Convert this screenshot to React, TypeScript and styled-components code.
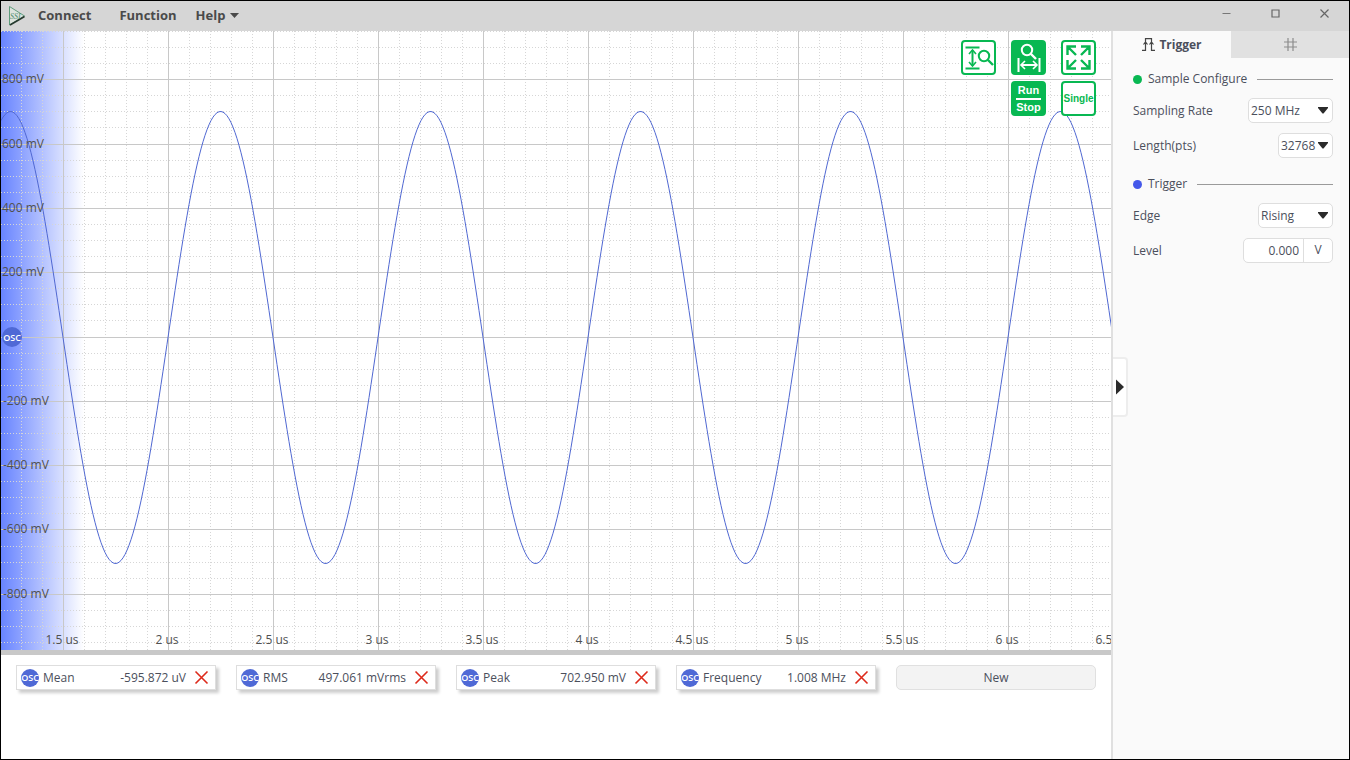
import React, { useEffect, useRef, useState } from 'react';
import styled, { createGlobalStyle } from 'styled-components';

const GlobalStyle = createGlobalStyle`
  *, *::before, *::after { box-sizing: border-box; }
  body { margin: 0; }
  body, button, input, select {
    font-family: "Open Sans", "Noto Sans", sans-serif;
    font-size: 12px;
    color: #4b4f5c;
  }
  button { border: 0; padding: 0; background: none; cursor: pointer; }
`;

const Window = styled.div`
  display: flex;
  flex-direction: column;
  min-height: 100vh;
  border: 1px solid #000;
  background: #fff;
`;

const TitleBar = styled.header`
  display: flex;
  align-items: center;
  height: 30px;
  flex: none;
  padding: 0 5px 0 6px;
  background: #d6d6d6;
`;

const Menu = styled.nav`
  display: flex;
  align-items: center;
  gap: 28px;
  margin: 0 0 2px 11px;
  flex: 1;
`;

const MenuItem = styled.button<{ $narrow?: boolean }>`
  display: flex;
  align-items: center;
  gap: 5px;
  margin-right: ${(p) => (p.$narrow ? '-9px' : '0')};
  font-size: 13px;
  font-weight: 700;
  line-height: 20px;
  color: #4a4a4a;
`;

const WindowButtons = styled.div`
  display: flex;
  align-self: flex-start;
`;

const WindowButton = styled.button`
  display: grid;
  place-items: center;
  width: 40px;
  height: 25px;
  margin-left: 9px;
`;

const Main = styled.main`
  display: flex;
  flex: 1;
`;

const Workspace = styled.section`
  display: flex;
  flex-direction: column;
  flex: 1;
  min-width: 0;
`;

const Plot = styled.div`
  position: relative;
  flex: 1;
  min-height: 500px;
  overflow: hidden;
`;

const PlotDrawing = styled.svg`
  position: absolute;
  inset: 0;
  width: 100%;
  height: 100%;
  text { font-size: 12px; fill: #505050; }
  .badge { font-size: 9px; font-weight: 600; fill: #fff; }
`;

const Tools = styled.div`
  position: absolute;
  top: 9px;
  right: 15px;
  display: grid;
  grid-template-columns: repeat(3, 35px);
  gap: 6px 15px;
`;

const ToolButton = styled.button<{ $filled?: boolean; $second?: boolean }>`
  display: flex;
  flex-direction: column;
  align-items: center;
  justify-content: center;
  width: 35px;
  height: 35px;
  border: 2px solid #08b852;
  border-radius: 4px;
  background: ${(p) => (p.$filled ? '#08b852' : '#fff')};
  color: ${(p) => (p.$filled ? '#fff' : '#08b852')};
  font-family: "Liberation Sans", Arial, sans-serif;
  font-weight: 700;
  font-size: ${(p) => (p.$filled ? '11px' : '10px')};
  line-height: 13px;
  ${(p) => p.$second && 'grid-column: 2;'}
`;

const RunLine = styled.span`
  width: 25px;
  height: 2px;
  margin: 1px 0;
  background: #fff;
`;

const Splitter = styled.div`
  height: 5px;
  flex: none;
  background: #c8c8c8;
`;

const Measurements = styled.div`
  display: flex;
  flex-wrap: wrap;
  align-content: flex-start;
  gap: 12px 20px;
  min-height: 104px;
  padding: 10px 15px;
`;

const Card = styled.div`
  display: flex;
  align-items: center;
  width: 200px;
  height: 25px;
  padding: 0 6px 0 4px;
  border: 1px solid #dedede;
  background: #fff;
  box-shadow: 3px 3px 3px rgba(0, 0, 0, 0.2);
`;

const Badge = styled.span`
  display: flex;
  align-items: center;
  justify-content: center;
  width: 18px;
  height: 18px;
  margin-right: 4px;
  border-radius: 50%;
  background: #4f69d6;
  color: #fff;
  font-size: 9px;
  font-weight: 600;
`;

const CardValue = styled.span`
  flex: 1;
  margin-right: 8px;
  text-align: right;
`;

const RemoveButton = styled.button`
  display: flex;
`;

const NewButton = styled.button`
  width: 200px;
  height: 25px;
  border: 1px solid #e0e0e0;
  border-radius: 5px;
  background: #f3f3f3;
  line-height: 22px;
`;

const SidePanel = styled.aside`
  position: relative;
  width: 238px;
  flex: none;
  border-left: 2px solid #e0e0e0;
  background: #fafafa;
`;

const CollapseHandle = styled.button`
  position: absolute;
  left: 0;
  top: 326px;
  display: flex;
  align-items: center;
  width: 15px;
  height: 60px;
  padding-left: 3px;
  border: 2px solid #ededed;
  border-left: 0;
  border-radius: 0 4px 4px 0;
  background: #fff;
`;

const Tabs = styled.div`
  display: flex;
  height: 27px;
  margin-bottom: 5px;
`;

const Tab = styled.button<{ $active?: boolean }>`
  display: flex;
  align-items: center;
  justify-content: center;
  gap: 4px;
  flex: 1;
  background: ${(p) => (p.$active ? '#fafafa' : '#e1e1e1')};
  font-weight: 700;
`;

const Group = styled.section`
  padding: 6px 16px 0 20px;
`;

const GroupTitle = styled.h2`
  display: flex;
  align-items: center;
  gap: 10px;
  margin: 0 0 9px;
  font-size: 12px;
  font-weight: 400;
  line-height: 20px;
  &::after { content: ''; flex: 1; height: 1px; background: #9a9a9a; }
`;

const Dot = styled.span<{ $color: string }>`
  width: 9px;
  height: 9px;
  margin-right: -4px;
  border-radius: 50%;
  background: ${(p) => p.$color};
`;

const Field = styled.div`
  display: flex;
  align-items: center;
  justify-content: space-between;
  height: 25px;
  margin-bottom: 10px;
`;

const SelectBox = styled.div<{ $width: number }>`
  position: relative;
  width: ${(p) => p.$width}px;
  svg { position: absolute; right: 5px; top: 9px; pointer-events: none; }
`;

const Select = styled.select`
  display: block;
  appearance: none;
  width: 100%;
  height: 25px;
  padding: 0 0 1px 2px;
  border: 1px solid #dedede;
  border-radius: 5px;
  background: #fff;
`;

const LevelBox = styled.div`
  display: flex;
  width: 90px;
  height: 25px;
  border: 1px solid #dedede;
  border-radius: 5px;
  background: #fff;
`;

const LevelInput = styled.input`
  width: 60px;
  padding: 0 4px 1px 0;
  border: 0;
  border-right: 1px solid #dedede;
  background: none;
  text-align: right;
`;

const Unit = styled.span`
  flex: 1;
  text-align: center;
  line-height: 22px;
`;

const EXTENT = 4000;
const ZERO_Y = 306;
const MAJOR_X = 105;
const FIRST_MAJOR = 62;
const MINOR_Y = 16.08;

const curve = Array.from({ length: EXTENT / 2 }, (_, i) => {
  const x = i * 2;
  const y = ZERO_Y + 0.5 - 226 * Math.sin((2 * Math.PI * (x - 167)) / 210);
  return `${x},${y.toFixed(2)}`;
}).join(' ');

const rowY = (r: number) => Math.floor(ZERO_Y + r * MINOR_Y) + 0.5;
const columnX = (c: number) => FIRST_MAJOR + c * 21 + 0.5;

const columns = Array.from({ length: 190 }, (_, i) => i - 2);
const rows = Array.from({ length: 80 }, (_, i) => i - 19);
const voltages = [800, 600, 400, 200, -200, -400, -600, -800];

function Waveform() {
  const ref = useRef<SVGSVGElement>(null);
  const [width, setWidth] = useState(1110);

  useEffect(() => {
    const measure = () => ref.current && setWidth(ref.current.getBoundingClientRect().width);
    measure();
    window.addEventListener('resize', measure);
    return () => window.removeEventListener('resize', measure);
  }, []);

  const labelCount = Math.floor((width - FIRST_MAJOR + 10) / MAJOR_X) + 1;
  const times = Array.from({ length: Math.max(labelCount, 0) }, (_, i) => 1.5 + i * 0.5);

  return (
    <PlotDrawing ref={ref} role="img" aria-label="Oscilloscope trace">
      <defs>
        <linearGradient id="fade">
          <stop offset="0" stopColor="#6884ff" />
          <stop offset="1" stopColor="#6884ff" stopOpacity="0" />
        </linearGradient>
      </defs>
      <rect width="83" height="100%" fill="url(#fade)" />
      <g shapeRendering="crispEdges" strokeWidth="1">
        {columns.filter((c) => c % 5 !== 0).map((c) => (
          <line key={c} x1={columnX(c)} x2={columnX(c)} y1="0" y2="100%" stroke="#d6d6d6" strokeDasharray="1 2" />
        ))}
        {rows.filter((r) => r % 4 !== 0).map((r) => (
          <line key={r} x1="0" x2="100%" y1={rowY(r)} y2={rowY(r)} stroke="#d6d6d6" strokeDasharray="1 2" />
        ))}
        {rows.filter((r) => r % 4 === 0).map((r) => (
          <line key={r} x1="0" x2="100%" y1={rowY(r)} y2={rowY(r)} stroke="#c8c8c8" />
        ))}
        {columns.filter((c) => c % 5 === 0).map((c) => (
          <line key={c} x1={columnX(c)} x2={columnX(c)} y1="0" y2="100%" stroke="#c8c8c8" />
        ))}
      </g>
      <polyline points={curve} fill="none" stroke="#5068d2" strokeWidth="1" />
      {voltages.map((v) => (
        <text key={v} x={v > 0 ? 1 : 2} y={Math.floor(ZERO_Y - (v / 50) * MINOR_Y) + 4}>{v} mV</text>
      ))}
      <svg y="100%" overflow="visible">
        {times.map((t, i) => (
          <text key={t} x={FIRST_MAJOR - 1 + i * MAJOR_X} y="-6" textAnchor="middle">{t} us</text>
        ))}
      </svg>
      <circle cx="11" cy="306" r="10" fill="#4f69d6" />
      <text className="badge" x="11" y="310" textAnchor="middle">OSC</text>
    </PlotDrawing>
  );
}

const DownArrow = () => (
  <svg width="10" height="7" viewBox="0 0 10 7" aria-hidden="true">
    <path d="M0 0h10v1L5.500 6.500h-1L0 1z" fill="#2b2b2b" />
  </svg>
);

type SelectFieldProps = { id: string; label: string; value: string; width: number };

function SelectField({ id, label, value, width }: SelectFieldProps) {
  return (
    <Field>
      <label htmlFor={id}>{label}</label>
      <SelectBox $width={width}>
        <Select id={id} defaultValue={value}>
          <option>{value}</option>
        </Select>
        <DownArrow />
      </SelectBox>
    </Field>
  );
}

const measurements = [
  { name: 'Mean', value: '-595.872 uV' },
  { name: 'RMS', value: '497.061 mVrms' },
  { name: 'Peak', value: '702.950 mV' },
  { name: 'Frequency', value: '1.008 MHz' },
];

export default function App() {
  return (
    <Window>
      <GlobalStyle />
      <TitleBar>
        <svg width="20" height="22" viewBox="0 0 20 22" aria-hidden="true">
          <path d="M2.500 1.500V20L17.500 11z" fill="#dde3dd" stroke="#5f9c7c" strokeWidth="1" />
          <path d="M3 20L17.500 11.500" stroke="#27392f" strokeWidth="1.600" />
          <text x="3" y="14" fontSize="8" fontStyle="italic" fontFamily="Liberation Serif, serif" fill="#4f8d6d">SSI</text>
        </svg>
        <Menu>
          <MenuItem>Connect</MenuItem>
          <MenuItem $narrow>Function</MenuItem>
          <MenuItem>
            Help
            <svg width="9" height="5" viewBox="0 0 9 5" aria-hidden="true"><path d="M0 0h9L4.500 5z" fill="#4a4a4a" /></svg>
          </MenuItem>
        </Menu>
        <WindowButtons>
          <WindowButton aria-label="Minimize">
            <svg width="9" height="9"><path d="M0.500 4.500h8" stroke="#777" /></svg>
          </WindowButton>
          <WindowButton aria-label="Maximize">
            <svg width="9" height="9"><path d="M1 1h7v7h-7z" fill="none" stroke="#666" strokeWidth="1.200" /></svg>
          </WindowButton>
          <WindowButton aria-label="Close">
            <svg width="9" height="9"><path d="M0.500 0.500l8 8M8.500 0.500l-8 8" stroke="#666" strokeWidth="1.200" /></svg>
          </WindowButton>
        </WindowButtons>
      </TitleBar>
      <Main>
        <Workspace>
          <Plot>
            <Waveform />
            <Tools>
              <ToolButton aria-label="Fit vertical">
                <svg width="31" height="31" viewBox="0 0 31 31" fill="none" stroke="#08b852" strokeWidth="2">
                  <path d="M2.500 5.500h14M2.500 26.500h14M9.500 8v16" />
                  <path d="M6 12l3.500-4L13 12M6 20l3.500 4L13 20" strokeWidth="1.600" />
                  <circle cx="21" cy="14" r="5.200" />
                  <path d="M25 18l5 5" strokeWidth="2.400" />
                </svg>
              </ToolButton>
              <ToolButton $filled aria-label="Fit horizontal">
                <svg width="31" height="31" viewBox="0 0 31 31" fill="none" stroke="#fff" strokeWidth="2">
                  <circle cx="14" cy="8" r="5.200" />
                  <path d="M18 12l5 5" strokeWidth="2.400" />
                  <path d="M5.500 16v14M26.500 16v14M8 23h16" />
                  <path d="M12 19l-4 4 4 4M20 19l4 4-4 4" strokeWidth="1.600" />
                </svg>
              </ToolButton>
              <ToolButton aria-label="Full screen">
                <svg width="31" height="31" viewBox="0 0 31 31" fill="none" stroke="#08b852" strokeWidth="2.400">
                  <path d="M13 4.500H4.500V13M4.500 4.500l8.500 8.500M18 4.500h8.500V13M26.500 4.500L18 13M13 26.500H4.500V18M4.500 26.500L13 18M18 26.500h8.500V18M26.500 26.500L18 18" />
                </svg>
              </ToolButton>
              <ToolButton $filled $second>
                <span>Run</span>
                <RunLine />
                <span>Stop</span>
              </ToolButton>
              <ToolButton>Single</ToolButton>
            </Tools>
          </Plot>
          <Splitter />
          <Measurements>
            {measurements.map((m) => (
              <Card key={m.name}>
                <Badge>OSC</Badge>
                <span>{m.name}</span>
                <CardValue>{m.value}</CardValue>
                <RemoveButton aria-label={`Remove ${m.name}`}>
                  <svg width="15" height="15"><path d="M1.500 1.500l12 12M13.500 1.500l-12 12" stroke="#dd2a1b" strokeWidth="1.600" /></svg>
                </RemoveButton>
              </Card>
            ))}
            <NewButton>New</NewButton>
          </Measurements>
        </Workspace>
        <SidePanel>
          <Tabs role="tablist">
            <Tab $active role="tab" aria-selected="true">
              <svg width="13" height="13" viewBox="0 0 13 13" fill="none" stroke="#444" strokeWidth="1.200">
                <path d="M0 12.400h3.500V0.600h6v11.800H13M1.500 6.500L3.500 4l2 2.500M7.500 6.500L9.500 4l2 2.500" />
              </svg>
              Trigger
            </Tab>
            <Tab role="tab" aria-selected="false" aria-label="Grid">
              <svg width="13" height="13" viewBox="0 0 13 13" stroke="#8d8d8d" strokeWidth="1.200">
                <path d="M4 0v13M9 0v13M0 4h13M0 9h13" />
              </svg>
            </Tab>
          </Tabs>
          <Group>
            <GroupTitle><Dot $color="#08b852" />Sample Configure</GroupTitle>
            <SelectField id="rate" label="Sampling Rate" value="250 MHz" width={85} />
            <SelectField id="length" label="Length(pts)" value="32768" width={55} />
          </Group>
          <Group>
            <GroupTitle><Dot $color="#4458ea" />Trigger</GroupTitle>
            <SelectField id="edge" label="Edge" value="Rising" width={75} />
            <Field>
              <label htmlFor="level">Level</label>
              <LevelBox>
                <LevelInput id="level" defaultValue="0.000" />
                <Unit>V</Unit>
              </LevelBox>
            </Field>
          </Group>
          <CollapseHandle aria-label="Collapse panel">
            <svg width="8" height="16" viewBox="0 0 8 16"><path d="M0 0.500L8 8 0 15.500z" fill="#2b2b2b" /></svg>
          </CollapseHandle>
        </SidePanel>
      </Main>
    </Window>
  );
}
